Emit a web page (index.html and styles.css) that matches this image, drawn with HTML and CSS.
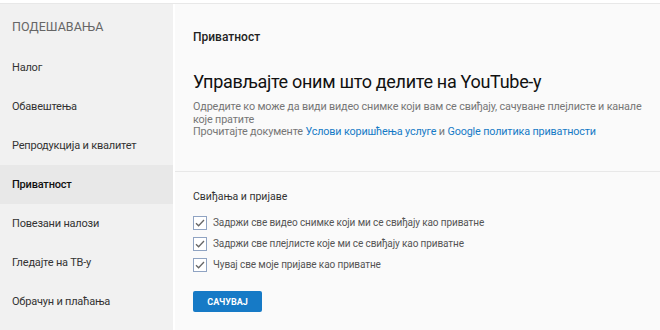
FILE: index.html
```html
<!DOCTYPE html>
<html lang="sr">
<head>
    <meta charset="UTF-8">
    <title>Подешавања - Приватност</title>
    <link rel="stylesheet" href="styles.css">
</head>
<body>
    <div class="page">
        <nav class="sidebar">
            <h3 class="sidebar-title">ПОДЕШАВАЊА</h3>
            <a class="nav-item">Налог</a>
            <a class="nav-item">Обавештења</a>
            <a class="nav-item">Репродукција и квалитет</a>
            <a class="nav-item active">Приватност</a>
            <a class="nav-item">Повезани налози</a>
            <a class="nav-item">Гледајте на ТВ-у</a>
            <a class="nav-item">Обрачун и плаћања</a>
        </nav>
        <main class="content">
            <section class="section intro">
                <h2 class="section-label">Приватност</h2>
                <h1 class="headline">Управљајте оним што делите на YouTube-у</h1>
                <p class="desc">Одредите ко може да види видео снимке који вам се свиђају, сачуване плејлисте и канале које пратите<br>
                Прочитајте документе <a href="#">Услови коришћења услуге</a> и <a href="#">Google политика приватности</a></p>
            </section>
            <section class="section likes">
                <h2 class="section-label">Свиђања и пријаве</h2>
                <!-- Чекбоксови -->
                <label class="check">
                    <svg class="box" width="14" height="14" viewBox="0 0 14 14"><rect x="0.5" y="0.5" width="13" height="13" fill="#fff" stroke="#8fa3c2"/><path d="M3 7.2l2.6 2.6L11 4" fill="none" stroke="#666" stroke-width="1.3"/></svg>
                    Задржи све видео снимке који ми се свиђају као приватне
                </label>
                <label class="check">
                    <svg class="box" width="14" height="14" viewBox="0 0 14 14"><rect x="0.5" y="0.5" width="13" height="13" fill="#fff" stroke="#8fa3c2"/><path d="M3 7.2l2.6 2.6L11 4" fill="none" stroke="#666" stroke-width="1.3"/></svg>
                    Задржи све плејлисте које ми се свиђају као приватне
                </label>
                <label class="check">
                    <svg class="box" width="14" height="14" viewBox="0 0 14 14"><rect x="0.5" y="0.5" width="13" height="13" fill="#fff" stroke="#8fa3c2"/><path d="M3 7.2l2.6 2.6L11 4" fill="none" stroke="#666" stroke-width="1.3"/></svg>
                    Чувај све моје пријаве као приватне
                </label>
                <button class="save-btn">САЧУВАЈ</button>
            </section>
        </main>
    </div>
</body>
</html>
```

FILE: styles.css
```css
body {
    margin: 0;
    padding: 0;
    background-color: #fff;
    font-family: Roboto, Arial, sans-serif;
    color: #222;
}
.page {
    display: flex;
    margin-top: 3px;
    border-top: 1px solid #e8e8e8;
    height: 326px;
    overflow: hidden;
}
.sidebar {
    width: 173px;
    background-color: #f1f1f1;
    display: flex;
    flex-direction: column;
    flex-shrink: 0;
}
.sidebar-title {
    margin: 0;
    padding: 15px 12px 14px;
    font-size: 12.5px;
    font-weight: 400;
    color: #666;
}
.nav-item {
    display: block;
    height: 39px;
    line-height: 39px;
    padding: 0 12px;
    font-size: 11px;
    letter-spacing: -0.2px;
    color: #333;
}
.nav-item.active {
    background-color: #e8e8e8;
    font-weight: 500;
    color: #111;
}
.content {
    flex-grow: 1;
    margin-left: 2px;
    background-color: #fafafa;
}
.section {
    padding: 0 8px 0 18px;
}
.intro {
    height: 168px;
    padding-top: 26px;
    box-sizing: border-box;
    border-bottom: 1px solid #e8e8e8;
}
.section-label {
    margin: 0;
    font-size: 12px;
    font-weight: 500;
    color: #222;
}
.headline {
    margin: 27px 0 0;
    font-size: 18px;
    letter-spacing: -0.3px;
    font-weight: 400;
    color: #111;
}
.desc {
    margin: 9px 0 0;
    font-size: 10.8px;
    letter-spacing: -0.15px;
    line-height: 12.5px;
    color: #767676;
}
.desc a {
    color: #167ac6;
    text-decoration: none;
}
.likes {
    padding-top: 18px;
}
.likes .section-label {
    font-size: 10.5px;
    font-weight: 400;
    color: #333;
    margin-bottom: 9px;
}
.check {
    display: flex;
    align-items: center;
    gap: 6px;
    height: 21px;
    font-size: 10px;
    letter-spacing: -0.1px;
    color: #555;
}
.box {
    flex-shrink: 0;
}
.save-btn {
    margin-top: 16px;
    width: 69px;
    height: 21px;
    border: none;
    border-radius: 2px;
    background-color: #167ac6;
    color: #fff;
    font-family: Roboto, Arial, sans-serif;
    font-size: 9px;
    font-weight: 700;
    cursor: pointer;
}
```
